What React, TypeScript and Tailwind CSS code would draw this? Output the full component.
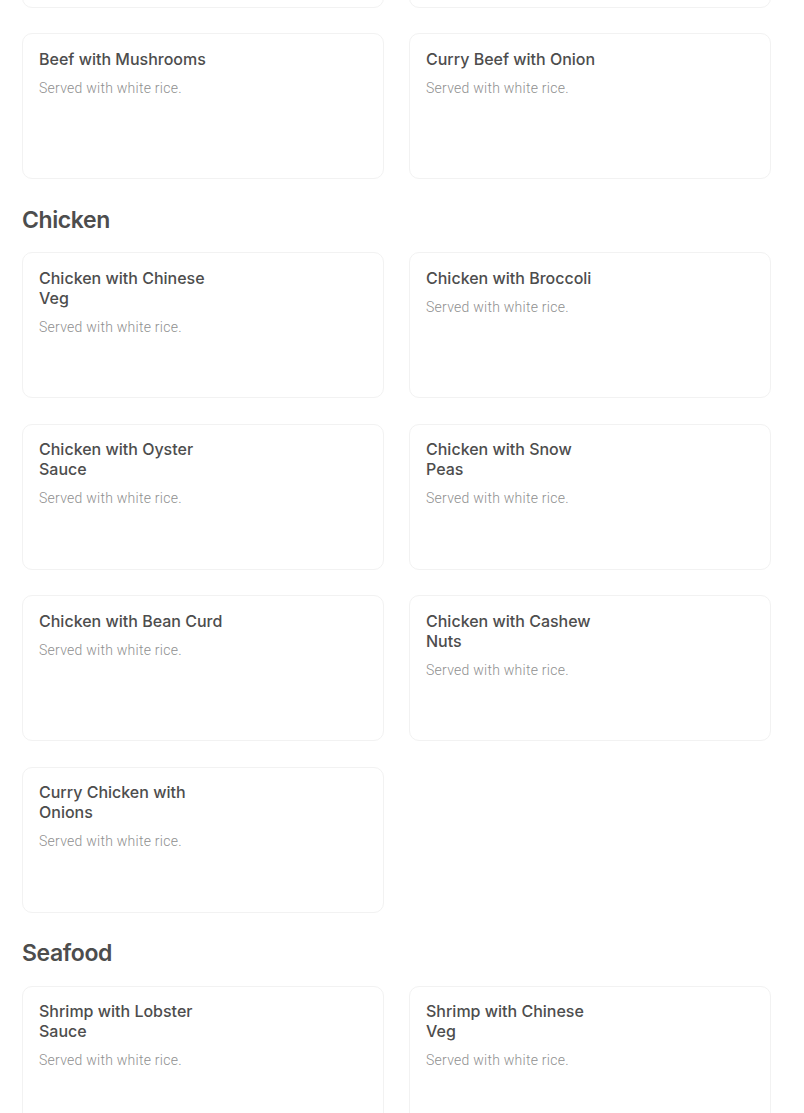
const sections: { name: string | null; items: string[] }[] = [
  {
    name: null,
    items: ["", "", "Beef with Mushrooms", "Curry Beef with Onion"],
  },
  {
    name: "Chicken",
    items: [
      "Chicken with Chinese Veg",
      "Chicken with Broccoli",
      "Chicken with Oyster Sauce",
      "Chicken with Snow Peas",
      "Chicken with Bean Curd",
      "Chicken with Cashew Nuts",
      "Curry Chicken with Onions",
    ],
  },
  {
    name: "Seafood",
    items: ["Shrimp with Lobster Sauce", "Shrimp with Chinese Veg", "Shrimp with Broccoli", "Shrimp with Snow Peas"],
  },
];

function ItemCard({ title }: { title: string }) {
  return (
    <div className="h-[146px] rounded-[10px] border border-[#f2f2f2] bg-white px-4 py-[14.5px]">
      {title && (
        <>
          <h4 className="w-[184px] font-['Inter',sans-serif] text-[16px] font-medium leading-[20px] text-[#4d4d4d]">
            {title}
          </h4>
          <p className="mt-[9px] font-['Roboto',sans-serif] text-[14px] font-light leading-[20px] tracking-[0.25px] text-[#8f8f8f]">
            Served with white rice.
          </p>
        </>
      )}
    </div>
  );
}

export default function App() {
  return (
    <div className="h-[1113px] overflow-hidden bg-white">
      <div className="mt-[-138px] pl-[22px] pr-[34px]">
        {sections.map((s, i) => (
          <div key={i}>
            {s.name && (
              <h3 className="mb-[17.5px] mt-[25.5px] font-['Inter',sans-serif] text-[23px] font-semibold leading-[30px] tracking-[-0.4px] text-[#4d4d4d]">
                {s.name}
              </h3>
            )}
            <div className="grid grid-cols-[362px_362px] gap-x-[25px] gap-y-[25.4px]">
              {s.items.map((it, j) => (
                <ItemCard key={j} title={it} />
              ))}
            </div>
          </div>
        ))}
      </div>
    </div>
  );
}
